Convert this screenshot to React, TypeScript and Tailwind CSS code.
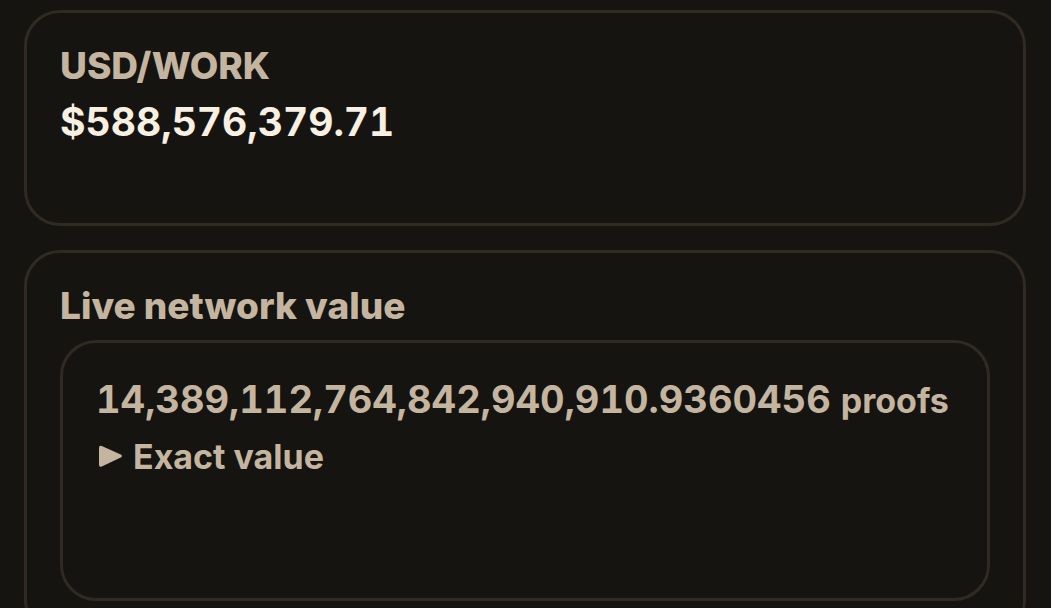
export default function App() {
  return (
    <main className="flex h-screen flex-col gap-6 overflow-hidden bg-[#151410] pr-[25px] pl-6 pt-2.5 font-['Inter',sans-serif] text-[#c4b5a0]">
      <section className="min-h-54 shrink-0 rounded-[36px] border-3 border-[#302a22] px-[33px] pt-[33px]">
        <h2 className="text-[37px] leading-10 font-extrabold">USD/WORK</h2>
        <p className="mt-3 text-[39px] leading-12 font-bold text-[#f8f0e3] tabular-nums">$588,576,379.71</p>
      </section>
      <section className="shrink-0 rounded-[36px] border-3 border-[#302a22] px-[33px] pt-[33px] pb-8">
        <h2 className="text-[37px] leading-10 font-extrabold">Live network value</h2>
        <div className="mt-3.5 min-h-[261px] rounded-[36px] border-3 border-[#302a22] px-[33px] pt-8">
          <p className="flex items-baseline gap-2.5 leading-12 font-bold">
            <span className="text-[38px] tabular-nums">14,389,112,764,842,940,910.9360456</span>
            <span className="text-[34px]">proofs</span>
          </p>
          <details className="mt-2.5">
            <summary className="flex cursor-pointer list-none items-center gap-2.5 text-[34px] leading-11 font-bold">
              <svg aria-hidden="true" className="h-6 w-[27px]" viewBox="0 0 27 24" fill="currentColor">
                <path d="M3 2.8Q3 0 5.8 1.1L24.7 9.4Q27.3 11 24.7 12.6L5.8 21.4Q3 22.5 3 19.7Z" />
              </svg>
              Exact value
            </summary>
            <p className="text-2xl">14,389,112,764,842,940,910.9360456</p>
          </details>
        </div>
      </section>
    </main>
  );
}
